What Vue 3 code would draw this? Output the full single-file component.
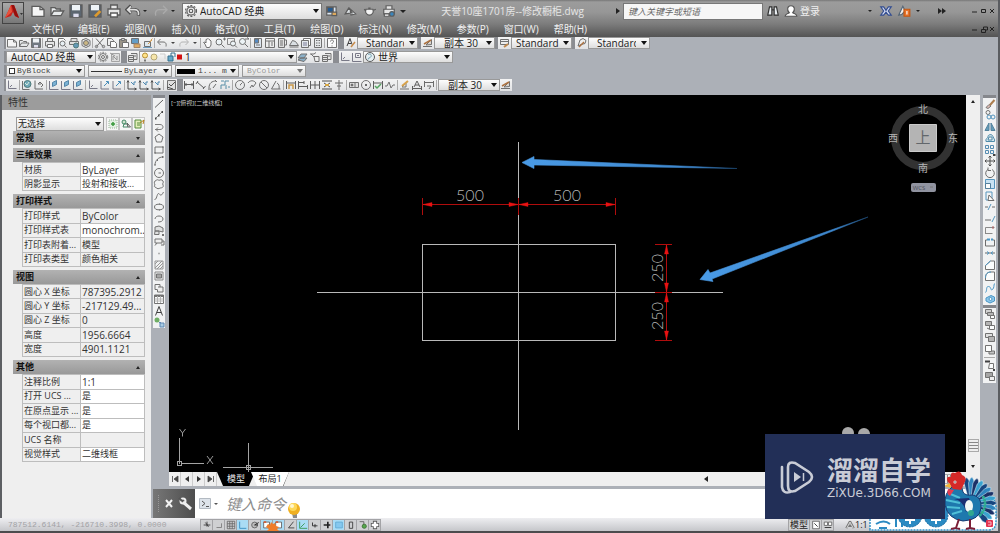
<script setup>
import { h } from 'vue'

const icons = {
  new: '<path d="M1.5 2.5h6l3 2.5v5h-9z" fill="#f6f6f6"/><path d="M7.5 2.5v2.5h3"/>',
  open: '<path d="M1.5 9.5v-6h3l1 1h3v1.500M1.500 9.500l2-3.500h7.500l-2 3.500z" fill="#e6e9ea"/>',
  save: '<path d="M1.500 1.500h9v9h-9z" fill="#5c6670"/><path d="M3 1.500h6v4h-6z" fill="#eef3f7" stroke="none"/><path d="M4 8h4v2.500h-4z" fill="#dde" stroke="none"/>',
  saveas: '<path d="M1.500 1.500h9v9h-9z" fill="#5c6670"/><path d="M3 1.500h6v4h-6z" fill="#eef3f7" stroke="none"/><path d="M6 10l4-4" stroke="#dd9a2e" stroke-width="2"/>',
  print: '<path d="M3.500 4.500v-3h5v3M1.500 4.500h9v4.500h-9z" fill="#e6e6e6"/><path d="M3.500 7.500h5v3h-5z" fill="#fff"/>',
  preview: '<path d="M2.500 10.500v-9h5l2 2" fill="#fff"/><circle cx="6.500" cy="6.500" r="2.500" fill="#e8f1f6"/><path d="M8.500 8.500l2 2"/>',
  publish: '<path d="M3 4.500v-3h6v3M1.500 4.500h9v3h-9z" fill="#ddd"/><circle cx="8" cy="8.500" r="2.500" fill="#4e8cae" stroke="#366"/>',
  dwf: '<path d="M2 3l4-1.500 4 2v5l-4 2-4-2z" fill="#eee"/><circle cx="6" cy="6" r="2.500" fill="#c5ad71"/>',
  cut: '<path d="M2 1.500l7 8M9.500 1.500l-7 8" stroke="#555"/><circle cx="2.500" cy="9.500" r="1.200"/><circle cx="9.500" cy="9.500" r="1.200"/>',
  copy: '<path d="M1.500 1.500h4l2 2v5h-6z" fill="#eee"/><path d="M4.500 4.500h4l2 2v4h-6z" fill="#fff"/>',
  paste: '<path d="M1.500 2.500h7v8h-7z" fill="#8c8577"/><path d="M4.500 5.500h6v5h-6z" fill="#fff"/><path d="M3.500 1.500h3v2h-3z" fill="#ccc"/>',
  match: '<path d="M1.500 1.500h7v5h-7z" fill="#4b8fc0"/><path d="M4 7h6v3.500h-6z" fill="#dda04b" stroke="#975"/>',
  bedit: '<path d="M2.500 4.500h6v5h-6z" fill="#dce8ef"/><path d="M8.500 3.500l2-2M6 7l4-4" stroke="#cf8c32"/><path d="M1 10.500h9" stroke="#5c93bb"/>',
  undo: '<path d="M4.500 2L1.500 5l3 3M2 5h5c3 0 3.500 2 3 4.500"/>',
  undow: '<path d="M4.500 2L1.500 5l3 3M2 5h5c3 0 3.500 2 3 4.500" stroke="#4c4c4c" stroke-width="2.500"/><path d="M4.500 2.500L2 5l2.500 2.500M2 5h5c3 0 3.500 2 3 4" stroke="#dcdcdc" stroke-width="1.300"/>',
  redo: '<path d="M7.500 2l3 3-3 3M10 5H5C2 5 1.500 7 2 9.500" stroke="#aaa"/>',
  pan: '<path d="M3 7L1.500 5.500 3 5l1 1V2.500l1.500-.500.500-.500 1 1 1 .500 1 1V8l-1.500 2.500h-3z" fill="#fff"/>',
  zoomrt: '<circle cx="5" cy="5" r="3" fill="#edf5f8"/><path d="M7.500 7.500l3 3M9 2h3M10.500.500v3" />',
  zoomwin: '<path d="M1.500 1.500h7v6h-7z" stroke="#777"/><circle cx="7" cy="6.500" r="2.500" fill="#edf5f8"/><path d="M9 8.500l2 2"/>',
  zoomprev: '<circle cx="4.500" cy="4.500" r="3" fill="#edf5f8"/><path d="M7 7l3 3M7 2h4l-2-1.500"/>',
  props: '<path d="M2.500 1.500h7v9h-7z" fill="#dbe5f1"/><path d="M2.500 2h4v4h-4z" fill="#3b79bb"/><path d="M4 8h4"/>',
  dcenter: '<path d="M1.500 1.500h9v9h-9z" fill="#eee"/><path d="M1.500 4h9M5 4v6.500M7 6h2M7 8h2"/>',
  toolpal: '<path d="M2.500 1.500h6v9h-6z" fill="#ddd"/><path d="M8.500 3h2v5h-2M4 4h3M4 6h3M4 8h3"/>',
  sheet: '<path d="M1.500 8.500l3-5 3 1 3 4z" fill="#d8dee2"/><path d="M1.500 10h9"/>',
  markup: '<path d="M3.500 1.500h7v7h-7z" fill="#fff"/><path d="M1.500 3.500h7v7h-7z" fill="#e3e9ed"/><path d="M3 6h4M3 8h4" stroke="#668"/>',
  calc: '<path d="M2.500 1.500h7v9h-7z" fill="#e5e8ea"/><path d="M4 3.500h4M4 6h4M4 8.500h4" stroke-dasharray="1 .5"/>',
  help: '<path d="M1.500 1.500h9v9h-9z" fill="#fff"/><path d="M4.500 4.500c0-2 3-2 3 0 0 1-1.500 1-1.500 2.500M6 8.500v1"/>',
  gear: '<circle cx="6" cy="6" r="3.500" fill="#eee"/><circle cx="6" cy="6" r="1.500"/><circle cx="6" cy="6" r="4.700" stroke-dasharray="1.700 1.300"/>',
  wsave: '<path d="M2.500 2.500h8v8h-8z" fill="#ddd" stroke="#999"/><path d="M1 2l5 3M4 9V5l4 4V5" stroke="#888"/>',
  astyle: '<path d="M2 9l3-7.500 2 6M3 6.500h3" stroke="#222"/><path d="M6 10l4-5" stroke="#c17b2f" stroke-width="1.500"/>',
  dstyle: '<path d="M1 9.500h9M4 8l5.500-5.500v5z" fill="#d8d0c8"/><path d="M2 7l7-4" stroke="#a25d23" stroke-width="1.500"/>',
  tstyle: '<path d="M1.500 2.500h8v5h-8zM1.500 4.500h8" fill="#eee"/><path d="M5 10l4-3" stroke="#b97831" stroke-width="2"/>',
  mstyle: '<path d="M2 9l2-6 3-1.500 3 2-1 3-4 1z" fill="#eee"/><path d="M3 10l5-5" stroke="#a25d23" stroke-width="1.500"/>',
  layers: '<path d="M1.500 4.500h5v6h-5zM4 2.500h6v6H6.500" fill="#e6e6e6"/><path d="M2 6.500h4M2 8.500h4M6 5h3"/>',
  layer1: '<path d="M1 7l3-4h6l-3 4zM1 9l3-2h6l-3 3.500z" fill="#7aa6c2"/>',
  layer2: '<path d="M1 3h4l2-1.500M5 5.500h5v5h-4zM2 3l3 3" fill="#eee"/>',
  ucs: '<path d="M2.500 1.500v8h8M4 8l2-2" stroke="#667"/>',
  ucsbox: '<path d="M1.500 2v8.500h9M4.500 2.500h5v4h-5zM6 4.500h2" stroke="#667"/>',
  globe: '<path d="M1.500 2v8.500h7"/><circle cx="6.500" cy="5" r="3.500" fill="#5b9eb0" stroke="#366"/><path d="M4 4l2 2 2-3" stroke="#d9ecdf"/>',
  ball: '<circle cx="6" cy="6" r="4.500" fill="#e4eef2"/><path d="M4 3.500c2-1 4 0 3 2s-3 1-3 3" stroke="#6c9aab"/>',
  uprev: '<path d="M2 1.500v8.500h8M5 5l2-2 3 3-2 2M5 5h3" stroke="#555"/>',
  uface: '<path d="M1.500 2v8.500h9" stroke="#667"/><path d="M4.500 7.500v-4l4-2v4z" fill="#67a8d0" stroke="#39739c"/>',
  uz: '<path d="M2 2v8h8" stroke="#667"/><path d="M5 7l4-4M7 2.500h2.500V5" stroke="#2e7db1"/>',
  ua: '<path d="M2 2v8h8M1 3.500L2 1.500l1 2M8.500 9l2 1-2 1" stroke="#333"/><path d="M5 3l3 3v-3h2" stroke="#3377a5"/>',
  uok: '<path d="M2.500 1.500h8v9h-8z" fill="#ddd"/><path d="M4 5l2 2 4-4M2 8l6 2" stroke="#333"/>',
  dlin: '<path d="M1.500 2v8M10.500 2v8M2 5.500h8M3.500 4L2 5.500 3.500 7M8.500 4L10 5.500 8.500 7" stroke="#444"/>',
  dali: '<path d="M2 3l7 6M1 5l2-3M8 10l2.500-3" stroke="#444"/>',
  darc: '<path d="M2 9C2 4 5 2 9 2M1 10h3M8 1l2 2M6 9l3-4" stroke="#555"/>',
  dord: '<path d="M2 10V6h4V2h4M2 2h3M7 6v4M9 8h2" stroke="#3c7f9b"/>',
  drad: '<circle cx="6" cy="6" r="4.500"/><path d="M6 6l2.500-2.500M6 6h.5"/>',
  djog: '<path d="M2 4c2-3 6-3 8 0M4 9l2-3 1 2 3-4"/>',
  ddia: '<circle cx="6" cy="6" r="4.500"/><path d="M3 3l6 6"/>',
  dang: '<path d="M10.500 10H1.500L6 2M7 4c2 1 2.500 3 2 6"/>',
  dq: '<path d="M1.500 2v8M10.500 2v8M2 4h8" stroke="#444"/><path d="M4 10V6h4v4" stroke="#c48b2b" stroke-width="1.500"/>',
  dbase: '<path d="M1.500 2v8M2 3.500h5M7 2v3M2 7.500h8M10.500 6v4" stroke="#444"/>',
  dcont: '<path d="M1.500 2v8M6 2v8M10.500 2v8M1 6h10" stroke="#444"/>',
  dspace: '<path d="M1 2h10M1 10h10M3 4l3 2-3 2M9 4L6 6l3 2" stroke="#333"/><path d="M4 6h4" stroke="#d49b24" stroke-width="2"/>',
  dbreak: '<path d="M6 1v3M6 8v3M2 4h8M4 7h4M6 4v4" stroke="#555"/>',
  tol: '<path d="M1.500 3.500h9v5h-9zM7 3.500v5" fill="#ddd"/><circle cx="4" cy="6" r="1" fill="#333"/>',
  cmark: '<circle cx="6" cy="6" r="4.500"/><path d="M6 5v2M5 6h2" stroke="#222"/>',
  insp: '<path d="M1.500 2v8M10.500 2v8M2 4h8" stroke="#444"/><path d="M3 7l2 2 4-4" stroke="#3b9948" stroke-width="1.500"/>',
  jogl: '<path d="M1 7h2l2-4 2 6 2-3h2"/>',
  dedit: '<path d="M1 10h9M3 8l4-4v4z"/><path d="M3 7l6-5" stroke="#d4952e" stroke-width="2"/>',
  dtedit: '<path d="M3 8l3-6 3 6M4 6h4M1.500 7v4M10.500 7v4M2 9.500h8" stroke="#444"/>',
  dupd: '<path d="M1.500 3.500h9M1.500 2v6M10.500 2v6M4 7h4l-2 3" stroke="#555"/>',
  line: '<path d="M2 9.500l8-7.500" stroke="#444"/>',
  xline: '<path d="M2 10l8-8" stroke="#777"/><path d="M2 9.500h1.500M5 6.500h1.500M8.500 3H10" stroke="#222" stroke-width="2"/>',
  pline: '<path d="M2 3.500h5c4 0 4 5 0 5H3M2 8.500h1M5 6.500l-2 2 2 2" stroke="#666"/>',
  poly: '<path d="M6 2l4 3-1.500 5h-5L2 5z"/>',
  rect: '<path d="M2 3h8v6H2z"/><path d="M1.500 9h1M9.500 3h1" stroke-width="2"/>',
  arc: '<path d="M2 10c0-5 4-8 8-8"/><path d="M1.500 10h1M4 5h1M9 2h1.500" stroke-width="2"/>',
  circle: '<circle cx="6" cy="6" r="4.500"/><path d="M5.500 6H8"/>',
  cloud: '<path d="M3 2.500c1-1 2-1 3 0 1-1 3-1 4 .5 1 2-1 2 0 4s-1 3-3 3c-1 1-3 1-4-.5C1 9 1 8 2 7 1 5 1 3 3 2.500z"/>',
  spline: '<path d="M1.500 9.500c2 1 2.500-6 4-6S7.500 8 10.500 2"/>',
  ellipse: '<ellipse cx="6" cy="6" rx="4.500" ry="2.800"/><path d="M6 3h.5M6 9h.5" stroke-width="2"/>',
  earc: '<path d="M2 6c0-4 8-4 8 0 0 2-2 3-5 3"/>',
  ins: '<path d="M2 7V3l4-1 4 2v4L6 7zM2 7h4v3.500H1.500z" fill="#ddd"/><path d="M9 11h2" stroke-width="2"/>',
  block: '<path d="M2 3h7v4H2zM4 7l-2 2.500M9 5h2v4H8" fill="#eee"/>',
  point: '<path d="M5.500 6.500h1" stroke-width="1.500"/>',
  hatch: '<path d="M2 2h8v8H2z" stroke="#888"/><path d="M2 5l3-3M2 9l7-7M4 10l6-6M7 10l3-3" stroke="#888"/>',
  grad: '<path d="M2 2h8v8H2z" stroke="#777"/><path d="M3.500 4h5v4h-5z" fill="#999"/>',
  region: '<path d="M2 2.500h5v5H2z"/><path d="M5 5h5v5H4.500V8" fill="#eee"/>',
  table: '<path d="M1.500 2h9v8.500h-9z" fill="#fff"/><path d="M1.500 3h9" stroke-width="2"/><path d="M1.500 6h9M1.500 8h9M4.500 3v7M7.500 3v7" stroke="#aaa"/>',
  mtext: '<path d="M2.500 10.500L6 1.500l3.500 9M4 7.500h4" stroke="#222"/>',
  addsel: '<circle cx="4" cy="4" r="2.500" fill="#59a34e" stroke="none"/><path d="M6 6.500h2M7 7h4v4H7z" fill="#9cc6e2" stroke="#47a"/>',
  erase: '<path d="M2 9.500l3-3 2 1.500-3 2.500z" fill="#e5b8b0"/><path d="M6 7l4.500-5" stroke="#a06a32" stroke-width="2"/>',
  cpy: '<circle cx="4" cy="3.500" r="2"/><circle cx="5" cy="8" r="2" stroke="#3683b3"/><circle cx="9" cy="8" r="2" stroke="#3683b3"/>',
  mirror: '<path d="M5 2v7.500H1zM7 2v7.500h4z" fill="#4c8daf" stroke="#386f8e"/>',
  offset: '<path d="M2 9.500c-1-3 2-3 2-5s4-3 5 0 2 2 1.500 5zM4 8h4V5H5z" stroke="#32789c" fill="#cfe2ec"/>',
  array: '<path d="M1.500 1.500h3v3h-3zM6.500 1.500h3v3h-3zM1.500 6.500h3v3h-3zM6.500 6.500h3v3h-3z" stroke="#3a7ba7"/><path d="M9 11h2.500" stroke="#222" stroke-width="2"/>',
  move: '<path d="M6 1v10M1 6h10M4.500 2.500L6 1l1.500 1.500M4.500 9.500L6 11l1.500-1.500M2.500 4.500L1 6l1.500 1.500M9.500 4.500L11 6 9.500 7.500" stroke="#333"/>',
  rotate: '<path d="M4 2.500a4.300 4.300 0 1 0 4 0M4 .500v3h3" stroke="#555"/>',
  scale: '<path d="M1.500 1.500h9v9h-9z" fill="#c3e0f2" stroke="#3c86b6"/><path d="M1.500 5.500h5v5h-5z" fill="#fff" stroke="#386b8c"/>',
  stretch: '<path d="M2 2h6v8H2z" stroke="#3c86b6"/><path d="M5 5l5 5.500H4z" fill="#fff" stroke="#555"/>',
  trim: '<path d="M1 6h3M8 6h3" stroke="#555"/><path d="M4 9l3-6" stroke="#3c86b6"/>',
  extend: '<path d="M1 7h6" stroke="#555"/><path d="M8 9l3-6" stroke="#3c86b6"/>',
  break1: '<path d="M1.500 10V3.500h9M1.500 9.500h7" stroke="#777"/><path d="M9 2v3" stroke="#a44"/>',
  break2: '<path d="M3 4H1.500v6h9V4H9" stroke="#555"/><path d="M3 3.500h3M7 3.500h2" stroke="#2e87bd" stroke-width="2"/>',
  join: '<path d="M1 6h10" stroke="#555"/><path d="M3 4.500L5 6 3 7.500M9 4.500L7 6l2 1.500" stroke="#2e87bd"/>',
  chamfer: '<path d="M1.500 10.500V6.500l5-4.500h4v8.500z" fill="#fff"/><path d="M1.500 6.500l5-4.500" stroke="#2e87bd"/>',
  fillet: '<path d="M1.500 10.500V8c0-4 2-6 5.500-6h3.500v8.500z" fill="#fff"/><path d="M1.500 8c0-4 2-6 5.500-6" stroke="#2e87bd"/>',
  blend: '<path d="M1.500 10.500c2-2 0-6 3-6s2 5 4 3 1-4 2-6" stroke="#2e87bd"/>',
  explode: '<path d="M2 5l5-2.500L10.500 4v4L6 10 2 8z" fill="#7cc0ea" stroke="#2e87bd"/><circle cx="6.500" cy="6" r="1.500" fill="#fff" stroke="#2e87bd"/>',
  ord1: '<path d="M1.500 1.500h6v4h-6z" fill="#ccc"/><path d="M3.500 4.500h6v3h-6z" fill="#aaa"/><path d="M6.500 7.500h4v3h-4z" fill="#fff"/>',
  ord2: '<path d="M1.500 1.500h6v4h-6z" fill="#aaa"/><path d="M5.500 5.500h5v4h-5z" fill="#fff"/><path d="M3 8l2 1"/>',
  ord3: '<path d="M1.500 1.500h7v4h-7z" fill="#ddd"/><path d="M4.500 4.500h6v5h-6z" fill="#aaa"/>',
  ord4: '<path d="M5 7h5.500v3H5z" fill="#bbb"/><path d="M1.500 1.500h6v6h-6z" fill="#fff"/>',
  ord5: '<path d="M1 2.500h5" stroke="#222" stroke-width="2"/><path d="M5.500 4.500h4v5h-5z" fill="#fff"/><path d="M9 11h2" stroke="#222" stroke-width="2"/>',
  ord6: '<path d="M1.500 1.500h7v5h-7z" fill="#999"/><path d="M5.500 5.500h5v4h-5z" fill="#eee"/>',
  plus: '<path d="M2 2h8v8H2z" stroke="#9ab79b" stroke-dasharray="1 1" fill="#e3efe3"/><path d="M6 4v4M4 6h4" stroke="#3a9a3d" stroke-width="1.500"/>',
  selobj: '<circle cx="4" cy="4" r="2" fill="#cfe3cf" stroke="#486"/><path d="M4 6h4v3H3z" stroke="#486"/><path d="M7 5l3.500 4H8z" fill="#fff"/>',
  qsel: '<path d="M2 2h6v8H2z" fill="#e3efb9" stroke="#578b3d"/><path d="M4 5h3M4 7h3" stroke="#578b3d"/><path d="M7 5l4-3-1 4" stroke="#b7811b"/>',
  snap: '<path d="M2 6h8M6 2v6M4 3l4 5" stroke="#333"/>',
  ortho: '<path d="M3 9h6V4" stroke="#777"/>',
  grid: '<path d="M1.500 1.500h9v9h-9zM1.500 4.500h9M1.500 7.500h9M4.500 1.500v9M7.500 1.500v9" stroke="#666"/>',
  gangle: '<path d="M2 2v8h8" stroke="#2e87bd"/>',
  polar: '<circle cx="5.500" cy="6" r="3.500" fill="#bbb"/><path d="M5.500 6l5-3M5.500 6h4" stroke="#222"/>',
  osnap: '<path d="M2 2.500h7v7H2z" fill="#fff"/><path d="M2 2.500h3" stroke="#d55b33" stroke-width="2"/>',
  angle: '<path d="M9 2L3 9.500h7" stroke="#333"/>',
  ducs: '<path d="M2 2v8h9M3 9l5-5" stroke="#2f9347"/>',
  dyn: '<path d="M3 3v4h6M6 5v4" stroke="#222"/>',
  lwt: '<path d="M2 6h8M7 2v8" stroke="#222" stroke-width="2"/>',
  tpy: '<path d="M2 2.500h8v7H2z" fill="#86c8ee" stroke="#5fa9d3"/>',
  qp: '<path d="M4 2.500h4v7.500H4z" stroke="#333"/>',
  sc: '<path d="M2 2h5v5"/><circle cx="7.500" cy="7.500" r="2.500" fill="#56a84c" stroke="#386f30"/>',
  cross: '<path d="M6 1v10M1 6h10" stroke="#555" stroke-width="5"/><path d="M6 2v8M2 6h8" stroke="#fff" stroke-width="3"/>',
  layout: '<path d="M2 1.500h8v9H2z" fill="#fff"/><path d="M4 4l4 4" stroke="#222"/>',
  quick: '<path d="M1.500 2.500h4v4h-4zM6.500 2.500h4v4h-4z" fill="#fff"/><path d="M2 9h8" stroke="#222"/>',
  annot: '<path d="M6 1.500L1.500 10M6 1.500L10.500 10M4 7h4" stroke="#777" stroke-width="2.500"/><path d="M6 2.500L2 10M6 2.500L10 10" stroke="#eee" stroke-width="1"/>',
  mail: '<path d="M1.500 2.500h8v7h-8z" fill="#dae5f0"/><path d="M2 3h5v4H2z" fill="#245a91"/><path d="M6 7h4v3H6z" fill="#dda95c"/>',
  sail: '<path d="M1 8.500l3-5 3 4zM5 4l5 4.500-4 1z" fill="#dfe4e7"/>',
  teapot: '<path d="M2.500 4.500h6c1 3-1 5-3 5s-4-2-3-5zM8.500 5.500l2.500-1M2.500 6L1 4.500M4.500 3.500h2" fill="#f3f3f3"/>',
  plotter: '<path d="M3.500 4.500v-3h5v3M1.500 4.500h9v4h-9z" fill="#e6e6e6"/><path d="M2 8.500h4v2H2z" fill="#fff"/><circle cx="8.500" cy="8.500" r="2" fill="#3b86bd"/>',
  binoc: '<path d="M1.500 9.500L3 2.500h2V9.500zM7 9.500v-7h2l1.500 7zM5 5h2" fill="#e9eef2" stroke="#333"/>',
  user: '<path d="M1 10.500c0-2 2-2 3.500-3C2 5 3 1.500 6 1.500S10 5 7.500 7.500C9 8.500 11 8.500 11 10.500z" fill="#fff" stroke="#555"/>',
  exch: '<path d="M1.500 2.500h2.500l2 3 2-3h2.500L8 6l2.500 3.500H8l-2-2.500-2 2.500H1.500L4 6z" fill="#d4dcf2" stroke="#344e91"/>',
  warn: '<path d="M1.500 9.500L5 2l2 4-3 3z" fill="#eee" stroke="#567"/><path d="M6 4.500h5v6H6z" fill="#e8732a" stroke="#c25814"/><path d="M8.500 6v3" stroke="#fff"/>',
}
const Icon = (p) => h('svg', { viewBox: '0 0 12 12', 'aria-hidden': 'true', fill: 'none', stroke: '#5c5c5c', innerHTML: icons[p.n] })
Icon.props = ['n']

const menus = ['文件(F)', '编辑(E)', '视图(V)', '插入(I)', '格式(O)', '工具(T)', '绘图(D)', '标注(N)', '修改(M)', '参数(P)', '窗口(W)', '帮助(H)']
const standard = 'new open save | print preview publish dwf | cut copy paste match bedit | undo > redo > | pan zoomrt zoomwin zoomprev | props dcenter toolpal sheet markup calc | help'.split(' ')
const ucsBar = 'ucs | globe uprev | uface uface uface | ucs uz uz | ua ua ua | uok'.split(' ')
const dimBar = 'dlin dali darc dord | drad djog ddia dang | dq dbase dcont dspace dbreak | tol cmark insp jogl | dedit dtedit dupd |'.split(' ')
const styles = [
  { icon: 'astyle', label: '文字样式', text: 'Standard', cls: 'clip' },
  { icon: 'dstyle', label: '标注样式', text: '副本 30', cls: 'inset' },
  { icon: 'tstyle', label: '表格样式', text: 'Standard', cls: '' },
  { icon: 'mstyle', label: '多重引线样式', text: 'Standard', cls: 'clip' },
]
const drawBar = 'line xline pline poly rect arc circle cloud spline ellipse earc ins block point hatch grad region table mtext addsel'.split(' ')
const modifyBar = 'erase cpy mirror offset array move rotate scale stretch trim extend break1 break2 join chamfer fillet blend explode'.split(' ')
const orderBar = 'ord1 ord2 ord3 ord4 | ord5 ord6'.split(' ')
const statusBar = 'snap ortho grid gangle polar osnap osnap angle ducs dyn lwt tpy qp sc cross'.split(' ')
const activeStatus = [3, 5, 6, 8, 11]

const sections = [
  { title: '常规', open: false, rows: [] },
  { title: '三维效果', open: true, rows: [['材质', 'ByLayer', 1], ['阴影显示', '投射和接收...', 1]] },
  { title: '打印样式', open: true, rows: [['打印样式', 'ByColor', 0], ['打印样式表', 'monochrom...', 1], ['打印表附着...', '模型', 0], ['打印表类型', '颜色相关', 0]] },
  { title: '视图', open: true, rows: [['圆心 X 坐标', '787395.2912', 0], ['圆心 Y 坐标', '-217129.49...', 0], ['圆心 Z 坐标', '0', 0], ['高度', '1956.6664', 0], ['宽度', '4901.1121', 0]] },
  { title: '其他', open: true, rows: [['注释比例', '1:1', 1], ['打开 UCS ...', '是', 1], ['在原点显示 ...', '是', 1], ['每个视口都...', '是', 1], ['UCS 名称', '', 0], ['视觉样式', '二维线框', 1]] },
]
const isLatin = (t) => /^[\x20-\x7e]*$/.test(t)
const tableHeight = (s) => ({ height: Math.round((s.rows.length * 44) / 3) + 'px' })
const feathers = [-8, 4, 16, 28, 40, 52, 64, 76, 88, 100, 112, 124, 136]
const featherColors = ['#17457f', '#2f86bf', '#1b3167', '#3aa3cf']
</script>

<template>
  <div class="app">
    <header class="head">
      <button class="logo" aria-label="应用程序菜单">
        <svg viewBox="0 0 22 22"><path d="M3 16L9 3l3 0 5 13-4-2-2-4-2 4z" fill="#c8231c" /><path d="M9 3l1 7-7 6z" fill="#e8523c" /><path d="M9.500 3h2.500l5 13-4-2z" fill="#96100d" /><path d="M18 11h3l-1.500 2z" fill="#333" /></svg>
      </button>
      <div class="title-row">
        <div class="quick">
          <button v-for="n in ['new', 'open', 'save', 'saveas', 'print', 'undow']" :key="n" class="qb" :aria-label="n"><Icon :n="n" class="i16" /></button>
          <span class="tri light"></span>
          <button class="qb" aria-label="redo"><Icon n="redo" class="i16" /></button>
          <span class="tri light"></span>
          <label class="combo work">
            <Icon n="gear" class="i14" />
            <select aria-label="工作空间"><option>AutoCAD 经典</option></select>
          </label>
          <button v-for="n in ['mail', 'sail', 'teapot', 'plotter']" :key="n" class="qb" :aria-label="n"><Icon :n="n" class="i14" /></button>
          <span class="tri"></span>
        </div>
        <h1>天誉10座1701房--修改橱柜.dwg</h1>
        <span class="right-tri"></span>
        <input class="search" type="search" aria-label="搜索" placeholder="键入关键字或短语" />
        <div class="info">
          <button class="qb" aria-label="搜索"><Icon n="binoc" class="i14" /></button>
          <button class="login"><Icon n="user" class="i14" />登录</button>
          <span class="tri small push"></span>
          <button class="qb" aria-label="Exchange"><Icon n="exch" class="i14" /></button>
          <button class="qb narrow" aria-label="360"><Icon n="warn" class="i14" /></button>
          <span class="tri small"></span>
          <span class="more"><i class="right-tri"></i><i class="right-tri"></i></span>
        </div>
        <svg class="win" viewBox="0 0 28 12"><path d="M2 7h5M11.500 4.500h4v3h-4zM20 4l4 4M24 4l-4 4" fill="none" stroke="#222" /></svg>
      </div>
      <nav class="menu">
        <button v-for="m in menus" :key="m">{{ m }}</button>
        <svg class="win" viewBox="0 0 28 12"><path d="M2 7h5M11.500 6.500h4v3h-4zM13.500 6v-2h4v3h-2M20 4l4 4M24 4l-4 4" fill="none" stroke="#222" /></svg>
      </nav>
    </header>

    <div class="bars">
      <div class="bar-row">
        <div class="bar">
          <template v-for="(n, k) in standard" :key="k">
            <i v-if="n === '|'" class="sep slim"></i>
            <span v-else-if="n === '>'" class="drop"></span>
            <button v-else class="tb" :aria-label="n"><Icon :n="n" class="i12" /></button>
          </template>
        </div>
        <div class="bar">
          <div v-for="s in styles" :key="s.label" class="style-pair">
            <button class="tb" :aria-label="s.label"><Icon :n="s.icon" class="i12" /></button>
            <label class="combo" :class="s.cls"><select :aria-label="s.label"><option>{{ s.text }}</option></select></label>
          </div>
        </div>
      </div>
      <div class="bar-row">
        <div class="bar">
          <label class="combo w90"><select aria-label="工作空间"><option>AutoCAD 经典</option></select></label>
          <button class="tb" aria-label="设置"><Icon n="gear" class="i12" /></button>
          <button class="tb" aria-label="保存工作空间"><Icon n="wsave" class="i12" /></button>
        </div>
        <div class="bar">
          <button class="tb" aria-label="图层特性"><Icon n="layers" class="i12" /></button>
          <label class="combo layer">
            <svg viewBox="0 0 44 12" class="layer-state"><circle cx="5" cy="4.500" r="2.500" fill="#ffe38a" stroke="#b68e35" /><path d="M4 8.500h2v2h-2z" fill="#777" /><circle cx="14" cy="6" r="3" fill="#f7e6ab" stroke="#b5a877" /><path d="M20 3h5v5" fill="none" stroke="#ccc" /><path d="M28 5h5v5h-5z" fill="#67a9c9" stroke="#356f8d" /><path d="M31 5V2h4v4" fill="none" stroke="#356f8d" /><path d="M37 3.500h5v5h-5z" fill="#d31010" /></svg>
            <select aria-label="图层"><option>1</option></select>
          </label>
          <button class="tb" aria-label="置为当前"><Icon n="layer1" class="i12" /></button>
          <button class="tb" aria-label="上一个图层"><Icon n="layer2" class="i12" /></button>
          <button class="tb" aria-label="图层状态"><Icon n="layers" class="i12" /></button>
        </div>
        <div class="bar">
          <button class="tb" aria-label="UCS"><Icon n="ucs" class="i12" /></button>
          <button class="tb" aria-label="命名 UCS"><Icon n="ucsbox" class="i12" /></button>
          <label class="combo w90"><Icon n="ball" class="i12" /><select aria-label="坐标系" class="tight"><option>世界</option></select></label>
        </div>
      </div>
      <div class="bar-row">
        <div class="bar props-bar">
          <label class="combo mono c1"><i class="sq"></i><select aria-label="颜色"><option>ByBlock</option></select></label>
          <label class="combo mono c2"><i class="ln"></i><select aria-label="线型"><option>ByLayer</option></select></label>
          <label class="combo mono c3"><i class="bk"></i><select aria-label="线宽"><option>1... m</option></select></label>
          <label class="combo mono c4"><select aria-label="打印样式" disabled><option>ByColor</option></select></label>
        </div>
      </div>
      <div class="bar-row">
        <div class="bar">
          <template v-for="(n, k) in ucsBar" :key="k">
            <i v-if="n === '|'" class="sep"></i>
            <button v-else class="tb" :aria-label="n"><Icon :n="n" class="i12" /></button>
          </template>
        </div>
        <div class="bar">
          <template v-for="(n, k) in dimBar" :key="k">
            <i v-if="n === '|'" class="sep"></i>
            <button v-else class="tb" :aria-label="n"><Icon :n="n" class="i12" /></button>
          </template>
          <label class="combo inset"><select aria-label="标注样式"><option>副本 30</option></select></label>
          <button class="tb" aria-label="标注样式"><Icon n="dstyle" class="i12" /></button>
        </div>
      </div>
    </div>

    <main class="work-area">
      <aside class="panel">
        <h2>特性</h2>
        <div class="panel-body">
          <div class="pick">
            <label class="combo"><select aria-label="对象"><option>无选择</option></select></label>
            <button v-for="n in ['plus', 'selobj', 'qsel']" :key="n" class="pk" :aria-label="n"><Icon :n="n" class="i12" /></button>
          </div>
          <section v-for="s in sections" :key="s.title">
            <button class="sec"><span>{{ s.title }}</span><i :class="s.open ? 'up' : 'down'"></i></button>
            <table v-if="s.open" :style="tableHeight(s)">
              <tbody>
                <tr v-for="r in s.rows" :key="r[0]">
                  <th scope="row">{{ r[0] }}</th>
                  <td :class="{ latin: isLatin(r[1]), edit: r[2] }">{{ r[1] }}</td>
                </tr>
              </tbody>
            </table>
          </section>
        </div>
      </aside>

      <div class="center">
        <div class="stage">
          <div class="side">
            <div class="vbar draw">
              <button v-for="n in drawBar" :key="n" :aria-label="n"><Icon :n="n" class="i12" /></button>
            </div>
          </div>
          <div class="view">
            <div class="view-row">
              <svg class="canvas" viewBox="169 95 797 377">
                <defs>
                  <linearGradient id="fadeA" x1="0" x2="1"><stop offset="0" stop-color="#4a9be6" /><stop offset=".8" stop-color="#3d86cc" /><stop offset="1" stop-color="#1d4a76" /></linearGradient>
                </defs>
                <text x="171" y="105" class="vp">[−][俯视][二维线框]</text>
                <g stroke="#b9b9b9" fill="none" shape-rendering="crispEdges">
                  <path d="M518.500 142v288M317 292.500h406M422.500 244.500h193v96h-193z" />
                </g>
                <g stroke="#b00d0d" fill="none" shape-rendering="crispEdges">
                  <path d="M422.500 198v17M615.500 198v17M518.500 198v17M422 204.500h193M655 244.500h17M655 292.500h17M655 340.500h17M666.500 244v97" />
                </g>
                <path d="M423 204.500l9-2v4zM518 204.500l-9-2v4zM519 204.500l9-2v4zM615 204.500l-9-2v4zM666.500 245l-2 9h4zM666.500 292l-2-9h4zM666.500 293l-2 9h4zM666.500 340l-2-9h4z" fill="#e81212" stroke="#e81212" stroke-width=".4" />
                <g class="dim">
                  <text x="470" y="201">500</text>
                  <text x="567" y="201">500</text>
                  <text transform="translate(663 268) rotate(-90)">250</text>
                  <text transform="translate(663 316) rotate(-90)">250</text>
                </g>
                <path d="M522 162.500l12-6v3l203 9-203-3.500v3.500z" fill="url(#fadeA)" stroke="url(#fadeA)" stroke-width=".6" />
                <path d="M700 279.500l8-10 2 3.500L868 217l-156 62 1 2.500z" fill="url(#fadeA)" stroke="url(#fadeA)" stroke-width=".6" />
                <circle cx="923" cy="138" r="28" fill="none" stroke="#323232" stroke-width="8" />
                <path d="M909.500 124.500h27v27h-27z" fill="#b4b4b4" stroke="#cacaca" />
                <text x="923" y="143" class="top">上</text>
                <g class="dir"><text x="923" y="113">北</text><text x="923" y="172">南</text><text x="893" y="142">西</text><text x="953" y="142">东</text></g>
                <rect x="911" y="183" width="25" height="9" rx="2" fill="#9093a0" />
                <text x="919" y="190" class="wcs">WCS</text>
                <path d="M930 187h3" stroke="#777" />
                <g fill="none" stroke="#a4a4a4" shape-rendering="crispEdges">
                  <path d="M179.500 438v26M181 463.500h23M177.500 461.500h4v4h-4zM223 467.500h50M248.500 443v29M246.500 465.500h4v4h-4z" />
                </g>
                <path d="M179.500 429l3 4 3-4M182.500 433v3.500M207 456l6 8M213 456l-6 8" fill="none" stroke="#999" />
                <circle cx="848" cy="433" r="6" fill="#a9a9a9" /><circle cx="864" cy="434" r="6" fill="#a9a9a9" />
              </svg>
              <div class="vscroll"><i class="up"></i><span class="thumb"></span><i class="down"></i></div>
            </div>
            <div class="tabs">
              <button class="nav" aria-label="第一个"><svg viewBox="0 0 12 12"><path d="M3.500 3v6M9 3v6L5 6z" fill="#444" stroke="#444" stroke-width=".8" /></svg></button>
              <button class="nav" aria-label="上一个"><svg viewBox="0 0 12 12"><path d="M8 3v6L4 6z" fill="#333" /></svg></button>
              <button class="nav" aria-label="下一个"><svg viewBox="0 0 12 12"><path d="M4 3v6l4-3z" fill="#333" /></svg></button>
              <button class="nav" aria-label="最后一个"><svg viewBox="0 0 12 12"><path d="M8.500 3v6M3 3v6l4-3z" fill="#444" stroke="#444" stroke-width=".8" /></svg></button>
              <button class="tab model">模型</button>
              <button class="tab">布局1</button>
              <svg class="slash" viewBox="0 0 8 14"><path d="M6.500 0L1 14" stroke="#555" /></svg>
              <div class="hscroll"><i class="left-tri"></i><span class="hthumb"></span></div>
            </div>
          </div>
          <div class="side right">
            <div class="vbar modify">
              <button v-for="n in modifyBar" :key="n" :aria-label="n"><Icon :n="n" class="i12" /></button>
            </div>
            <div class="vbar order">
              <template v-for="n in orderBar" :key="n">
                <i v-if="n === '|'" class="hsep"></i>
                <button v-else :aria-label="n"><Icon :n="n" class="i12" /></button>
              </template>
            </div>
          </div>
        </div>
        <div class="cmd">
          <div class="cmd-tools">
            <svg viewBox="0 0 42 29"><path d="M5.500 6v17" stroke="#999" stroke-dasharray="1 1" /><path d="M13 11l6 7M19 11l-6 7" stroke="#f3f3f3" stroke-width="2" /><path d="M30 13l8 7" stroke="#eee" stroke-width="3" /><circle cx="30" cy="12" r="2.500" fill="none" stroke="#eee" stroke-width="2" /><path d="M26 9l3 3" stroke="#555" stroke-width="2" /></svg>
          </div>
          <label class="cmd-in">
            <svg viewBox="0 0 24 14"><path d="M1.500 1.500h11v10h-11z" fill="#dde3ea" stroke="#b3bac2" /><path d="M4 4l3 2.500L4 9M8 9.500h3" fill="none" stroke="#555" /><path d="M16 6h4l-2 2z" fill="#555" /></svg>
            <input type="text" aria-label="命令行" placeholder="键入命令" />
          </label>
        </div>
      </div>
    </main>

    <footer class="status">
      <output class="coords">787512.6141, -216710.3998, 0.0000</output>
      <div class="modes">
        <button v-for="(n, k) in statusBar" :key="k" :class="{ on: activeStatus.includes(k) }" :aria-label="n"><Icon :n="n" class="i10" /></button>
      </div>
      <div class="space">
        <button class="txt">模型</button>
        <button aria-label="布局"><Icon n="layout" class="i10" /></button>
        <button aria-label="快速查看"><Icon n="quick" class="i10" /></button>
      </div>
      <div class="scale-box"><Icon n="annot" class="i10" />1:1</div>
    </footer>

    <svg class="bulb" viewBox="0 0 36 30">
      <path d="M27 12h5v5h-4z" fill="#8b8b8b" /><circle cx="29" cy="8" r="6" fill="#f0b021" /><circle cx="28" cy="6" r="4" fill="#fdd95a" /><circle cx="27" cy="5" r="2" fill="#fff6cf" />
      <path d="M1 26l2-3 2 1 1-3 2 2 2-1 1 3 3 1-2 2 2 2H2l2-2z" fill="#ee7d2b" />
    </svg>

    <svg class="rooster" viewBox="0 0 130 60">
      <path d="M2 59V36q0-6 6-6h68l10-6h30q12 2 12 12v15q0 8-8 8z" fill="#fff" stroke="#3193c9" stroke-width="1.500" stroke-dasharray="2 1" />
      <path d="M8 53q8-5 14 0M25 46h10M28 42v14M34 42v14M11 57h8" stroke="#2b8ac2" stroke-width="2" fill="none" />
      <circle cx="42" cy="44" r="12" fill="#2b8ac2" stroke="#1c6ca2" stroke-dasharray="2 1" /><circle cx="68" cy="44" r="12" fill="#2b8ac2" stroke="#1c6ca2" stroke-dasharray="2 1" />
      <path d="M37 49h10M42 45v8M63 49h10M68 45v8" stroke="#fff" stroke-width="2" />
      <g transform="translate(102 33)">
        <path v-for="(a, k) in feathers" :key="a" d="M0 0l-3-21q3-11 6 0z" :fill="featherColors[k % 4]" stroke="#d6ecf5" stroke-width=".5" :transform="`rotate(${a})`" />
        <circle v-for="a in feathers.slice(6)" :key="'t' + a" cx="0" cy="-15" r="1.500" fill="#2fae8f" :transform="`rotate(${a})`" />
      </g>
      <path d="M84 16q-8 6-7 18 3 14 18 16 17-1 18-13 1-11-8-13-8 1-10-3-1-4-2-7z" fill="#1e78ad" stroke="#173a72" />
      <path d="M80 22l12 5M78 29l14 3M79 36l13 1M84 43l10-3" stroke="#4fc0d8" stroke-width="2" />
      <path d="M86 28q9 1 12 13 6-6 3-14z" fill="#1b2f72" /><ellipse cx="101" cy="35" rx="4" ry="6" fill="#f2f7f4" /><circle cx="103" cy="42" r="3" fill="#31a78f" />
      <path d="M80 11q-3-6 3-5-1-6 4-4 5-4 7 2 6 2 2 9l-3 6-8-1z" fill="#d52928" /><path d="M82 12l-6 3 7 2z" fill="#f1b63b" /><circle cx="87" cy="11" r="1.500" fill="#fff" /><circle cx="87" cy="11" r=".7" fill="#222" /><path d="M80 18q-2 5 2 7l4-6z" fill="#e33b50" />
      <path d="M91 48l-3 9-5 1M88 57l4 1M102 48v9l-4 1M102 57l5 1" stroke="#7b1f37" stroke-width="2" fill="none" />
      <rect x="118" y="49" width="7" height="7" rx="1" fill="#e33350" /><path d="M120 51h3v3h-3" fill="none" stroke="#f8bdc6" />
    </svg>

    <div class="mark">
      <svg viewBox="0 0 36 36"><path d="M2 8v20q1 7 8 5M8 27V8q0-6 7-4l14 9q6 5 0 10l-14 9q-7 2-7-5z" fill="none" stroke="#c9ccd6" stroke-width="2.600" stroke-linecap="round" /><path d="M14 13v10l7-5z" fill="#c9ccd6" /><path d="M23.500 14v8" stroke="#c9ccd6" stroke-width="1.500" /></svg>
      <div><strong>溜溜自学</strong><span>ZiXUe.3D66.COM</span></div>
    </div>
  </div>
</template>

<style>
html, body { margin: 0; background: #acb0b7; }
</style>
<style scoped>
* { box-sizing: border-box; }
.app { position: relative; display: flex; flex-direction: column; min-height: 100vh; overflow: hidden; background: #acb0b7; border-right: 2px solid #5a5c60; border-bottom: 2px solid #4c4c4e; font: 10px/12px "Open Sans", "Noto Sans", "Noto Sans CJK SC", sans-serif; color: #222; }
button, select, input { font: inherit; color: inherit; }
button { border: 0; padding: 0; margin: 0; background: none; display: flex; align-items: center; justify-content: center; }
svg { display: block; flex: none; }
.i10 { width: 10px; height: 10px; }
.i12 { width: 12px; height: 12px; }
.i14 { width: 14px; height: 14px; }
.i16 { width: 16px; height: 16px; }

.head { display: grid; grid-template-columns: 24px 1fr; height: 37px; flex: none; position: relative; background: linear-gradient(#777 0, #9c9c9c 2px, #979797 12px, #7c7c7c 24px, #545454 37px); color: #f0f0f0; }
.logo { width: 22px; height: 22px; margin: 2px 0 0 2px; background: linear-gradient(#aaa, #777); border: 1px solid #444; }
.logo svg { width: 22px; height: 22px; }
.title-row { display: flex; align-items: center; height: 22px; }
.quick { display: flex; align-items: center; padding-left: 4px; }
.qb { width: 19px; height: 18px; }
.qb.narrow { width: 18px; }
.tri { width: 0; border: 3px solid transparent; border-top: 3px solid #222; border-bottom: 0; margin: 0 3px 0 2px; }
.tri.light { border-width: 2px; border-bottom: 0; margin: 0 4px 0 1px; }
.tri.small { border-width: 2px; border-bottom: 0; margin: 0 4px 0 3px; }
.right-tri { border: 3px solid transparent; border-left: 4px solid #222; border-right: 0; margin-right: 3px; }
.more { display: flex; margin: 0 24px 0 14px; }
.more .right-tri { margin: 0; }
h1 { flex: 1; margin: 0; text-align: center; font-size: 10px; font-weight: 400; color: #e6e6e6; white-space: nowrap; }
.search { width: 140px; height: 17px; border: 1px solid #777; background: #f6f6f6; padding: 0 4px; font-size: 9px; font-style: italic; outline: 0; color: #222; }
.search::placeholder { color: #666; opacity: 1; }
.info { display: flex; align-items: center; }
.login { gap: 2px; padding-left: 2px; }
.tri.small.push { margin-left: 48px; }
.win { width: 28px; height: 12px; }
.menu { grid-column: 1 / 3; position: absolute; left: 24px; right: 0; top: 22px; display: flex; height: 14px; align-items: center; }
.menu button { padding: 0 7px 0 8px; font-size: 10px; white-space: nowrap; }
.menu .win { margin-left: auto; }

.combo { position: relative; display: flex; align-items: center; height: 12px; border: 1px solid #999; background: linear-gradient(#fdfdfd, #dedede); min-width: 0; color: #222; }
.combo select { appearance: none; border: 0; background: none; flex: 1; min-width: 0; width: 100%; height: 100%; padding: 0 12px 0 4px; font-size: 10px; line-height: 10px; outline: 0; color: inherit; overflow: hidden; }
.combo select.tight { padding-left: 2px; }
.combo::after { content: ""; position: absolute; right: 2px; top: 50%; margin-top: -2px; border: 3px solid transparent; border-top: 4px solid #111; border-bottom: 0; pointer-events: none; }
.work { width: 140px; height: 17px; margin-left: 3px; border-color: #777; padding-left: 1px; }
.work select { padding-left: 2px; }

.bars { display: flex; flex-direction: column; gap: 2px; padding: 0 0 4px 4px; flex: none; }
.bar-row { display: flex; height: 12px; }
.bar { display: flex; height: 12px; align-items: center; background: linear-gradient(#f4f4f4, #e2e3e5); border-left: 6px solid #8b8d92; }
.bar:first-child { border-left-width: 2px; }
.tb { width: 12px; height: 12px; flex: none; }
.tb svg, .vbar svg { opacity: .85; }
.sep { width: 1px; height: 10px; margin: 0 1px; background: #aaa; }
.sep.slim { margin-left: 0; }
.drop { width: 10px; height: 12px; display: flex; align-items: center; justify-content: center; }
.drop::after { content: ""; border: 2px solid transparent; border-top: 2px solid #444; border-bottom: 0; }
.style-pair { display: flex; align-items: center; width: 77px; padding-left: 1px; border-right: 3px solid #8b8d92; }
.style-pair .combo { flex: 1; }
.style-pair:last-child { border: 0; width: 75px; }
.clip select { padding: 0 13px 0 8px; text-overflow: clip; }
.inset { width: 62px; }
.inset select { padding-left: 9px; }
.w90 { width: 90px; }
.bar > .w90 + .tb { margin-left: 1px; }
.layer { width: 158px; }
.layer-state { width: 44px; height: 12px; }
.layer select { padding-left: 1px; }
.props-bar { gap: 3px; }
.mono select { font: 8px/10px "Liberation Mono", monospace; color: #444; }
.c1 { width: 79px; } .c2 { width: 84px; } .c3 { width: 64px; } .c4 { width: 64px; }
.combo.c3 select { padding: 0 8px 0 3px; }
.c4 select { color: #999; opacity: 1; }
.c4::after { border-top-color: #777; }
.sq { width: 6px; height: 6px; border: 1px solid #333; margin-left: 2px; flex: none; background: #fff; }
.combo.c1 select, .combo.c2 select { padding-left: 2px; }
.ln { width: 31px; height: 1px; background: #333; margin-left: 2px; flex: none; }
.bk { width: 18px; height: 5px; background: #000; margin-left: 1px; flex: none; }

.work-area { display: flex; flex: 1; }
.panel { width: 153px; flex: none; background: #efefef; border-left: 2px solid #5d5f63; border-right: 2px solid #acb0b7; }
.panel h2 { margin: 0; height: 15px; padding-left: 6px; font-size: 10px; line-height: 15px; font-weight: 400; background: #9c9c9c; color: #333; }
.panel-body { padding: 7px 6px 0 11px; display: flex; flex-direction: column; gap: 3px; }
.pick { display: flex; height: 14px; margin-bottom: -3px; padding-left: 3px; }
.pick .combo { width: 88px; height: 14px; margin-right: 2px; }
.pick .combo select { font-size: 9px; padding-left: 1px; }
.pk { width: 13px; height: 14px; border: 1px solid #c5c5c5; background: #f6f6f6; }
.sec { display: flex; justify-content: space-between; width: 100%; height: 14px; padding: 0 5px 0 3px; background: linear-gradient(#b2b2b2, #999); color: #111; font-size: 9px; font-weight: 700; line-height: 14px; }
.up { border: 2px solid transparent; border-bottom: 3px solid #222; border-top: 0; }
.down { border: 2px solid transparent; border-top: 3px solid #222; border-bottom: 0; }
table { width: 123px; margin-left: 9px; border-collapse: collapse; table-layout: fixed; }
th, td { padding: 0 0 0 2px; border: 1px solid #bdbdbd; font-size: 9px; line-height: 12px; font-weight: 400; text-align: left; white-space: nowrap; overflow: hidden; color: #333; }
th { width: 58px; padding-left: 1px; }
td { padding-left: 1px; }
td.latin { font-size: 10px; }
td.edit { background: #fff; }

.center { flex: 1; min-width: 0; display: flex; flex-direction: column; }
.stage { flex: 1; display: flex; }
.side { width: 16px; flex: none; padding: 0 4px 0 0; }
.side.right { width: 18px; padding: 0 2px 0 3px; }
.vbar { display: flex; flex-direction: column; align-items: center; background: #f1f2f3; border-top: 3px solid #85878c; }
.vbar button { flex: 1; min-height: 0; }
.hsep { height: 1px; margin: 1px 0; width: 11px; background: #aaa; }
.draw { height: 233px; }
.modify { height: 210px; }
.order { height: 78px; }
.view { flex: 1; min-width: 0; display: flex; flex-direction: column; }
.view-row { flex: 1; display: flex; }
.canvas { flex: 1; min-width: 0; height: 377px; background: #000; }
.vp { font-size: 6px; fill: #ccc; }
.dim { font: 300 16px Lato, "Open Sans", sans-serif; fill: #b5b5b5; text-anchor: middle; }
.dir { font-size: 10px; fill: #b5b5b5; text-anchor: middle; }
.top { font-size: 15px; fill: #62676b; text-anchor: middle; }
.wcs { font-size: 6px; fill: #4d505a; text-anchor: middle; }
.vscroll { width: 14px; background: #efefef; display: flex; flex-direction: column; align-items: center; padding: 5px 0 4px; }
.thumb { width: 11px; height: 13px; margin-top: auto; margin-bottom: 13px; border: 1px solid #aaa; background: repeating-linear-gradient(#eee 0 2px, #888 2px 3px); }
.tabs { display: flex; height: 14px; background: #efefef; }
.nav { width: 12px; border-right: 1px solid #ccc; }
.nav svg { width: 12px; height: 12px; }
.tab { width: 38px; font-size: 9px; background: #fff; clip-path: polygon(0 0, 100% 0, 84% 100%, 16% 100%); margin-right: -4px; }
.model { background: #000; color: #eee; position: relative; }
.slash { width: 8px; height: 14px; margin-left: -3px; }
.hscroll { flex: 1; display: flex; align-items: center; }
.left-tri { border: 3px solid transparent; border-right: 4px solid #222; border-left: 0; margin-left: 60%; }
.hthumb { width: 10px; height: 10px; margin-left: auto; margin-right: 26px; border: 1px solid #aaa; background: repeating-linear-gradient(90deg, #eee 0 2px, #888 2px 3px); }
.cmd { display: flex; height: 29px; margin-top: 3px; }
.cmd-tools { width: 42px; background: linear-gradient(90deg, #777, #4d4d4d); }
.cmd-tools svg { width: 42px; height: 29px; }
.cmd-in { flex: 1; display: flex; align-items: center; padding-left: 3px; background: #fff; margin-right: 18px; }
.cmd-in svg { width: 24px; height: 14px; }
.cmd-in input { flex: 1; border: 0; outline: 0; padding: 0 0 0 4px; font-size: 15px; height: 24px; background: none; }
.cmd-in input::placeholder { color: #8d8d8d; opacity: 1; font-style: italic; }

.status { display: flex; align-items: center; height: 13px; flex: none; background: linear-gradient(#eeeef1, #c5c6ca); padding-left: 8px; }
.coords { width: 192px; font: 8px/12px "Liberation Mono", monospace; color: #a2a2a5; white-space: pre; }
.modes, .space { display: flex; }
.modes button, .space button { width: 13px; height: 12px; border: 1px solid #a3a3a6; background: #cfd0d2; margin-right: -1px; }
.modes .on { background: #aadcf5; }
.space { margin-left: auto; }
.space .txt { width: 22px; font-size: 9px; }
.scale-box { display: flex; align-items: center; width: 165px; padding-left: 12px; font-size: 9px; }

.bulb { position: absolute; left: 265px; bottom: 0; width: 36px; height: 30px; }
.rooster { position: absolute; right: 0; bottom: 0; width: 130px; height: 60px; }
.mark { position: absolute; right: 53px; bottom: 12px; width: 180px; height: 85px; display: flex; align-items: center; gap: 11px; padding-left: 15px; background: #222f57; color: #c9ccd6; }
.mark svg { width: 36px; height: 36px; }
.mark div { display: flex; flex-direction: column; }
.mark strong { font-size: 26px; line-height: 32px; font-weight: 700; white-space: nowrap; }
.mark span { font: 12px/14px "DejaVu Sans", sans-serif; white-space: nowrap; }
</style>
